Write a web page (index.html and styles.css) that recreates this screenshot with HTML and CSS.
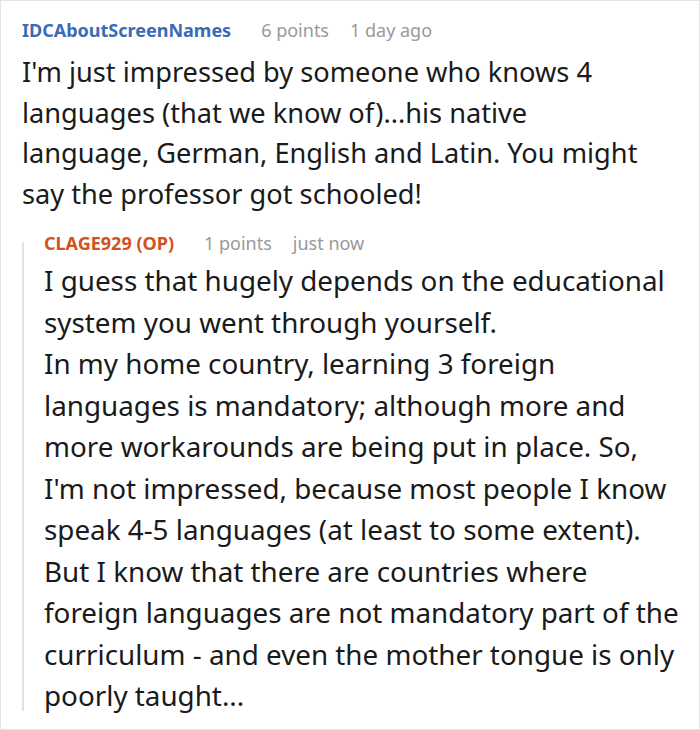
FILE: index.html
```html
<!DOCTYPE html>
<html>
<head>
<meta charset="utf-8">
<link rel="stylesheet" href="styles.css">
</head>
<body>
<div class="frame">
  <div class="comment">
    <div class="meta">
      <span class="author">IDCAboutScreenNames</span>
      <span class="points">6 points</span>
      <span class="time">1 day ago</span>
    </div>
    <p class="text">I'm just impressed by someone who knows 4 languages (that we know of)...his native language, German, English and Latin. You might say the professor got schooled!</p>
  </div>
  <div class="reply">
    <div class="meta">
      <span class="author op">CLAGE929 (OP)</span>
      <span class="points">1 points</span>
      <span class="time">just now</span>
    </div>
    <p class="text text-reply">I guess that hugely depends on the educational system you went through yourself.<br>In my home country, learning 3 foreign languages is mandatory; although more and more workarounds are being put in place. So, I'm not impressed, because most people I know speak 4-5 languages (at least to some extent).<br>But I know that there are countries where foreign languages are not mandatory part of the curriculum - and even the mother tongue is only poorly taught...</p>
  </div>
</div>
</body>
</html>
```
FILE: styles.css
```css
html, body {
  margin: 0;
  padding: 0;
  background: #fff;
}
.frame {
  box-sizing: border-box;
  width: 700px;
  height: 730px;
  border: 1px solid #e4e4e4;
  padding: 15px 0 0 21px;
  font-family: "Noto Sans", "Open Sans", sans-serif;
  color: #1a1a1a;
  overflow: hidden;
}
.meta {
  display: flex;
  align-items: baseline;
  font-size: 18px;
  line-height: 28px;
}
.author {
  font-weight: 700;
  color: #3a6ab8;
  margin-right: 30px;
}
.points {
  margin-right: 21px;
}
.points, .time {
  color: #999;
}
.text {
  width: 636px;
  margin: 8px 0 0;
  font-size: 27.2px;
  line-height: 40.5px;
}
.reply {
  position: relative;
  margin-top: 15px;
  padding-left: 22px;
}
.reply::before {
  content: "";
  position: absolute;
  left: 0;
  top: 13px;
  bottom: 6px;
  width: 2px;
  background: #e2e2e2;
}
.text-reply {
  width: 642px;
  margin-top: 3px;
  font-size: 27.8px;
  line-height: 41.5px;
}
.author.op {
  color: #d4501c;
}
```
